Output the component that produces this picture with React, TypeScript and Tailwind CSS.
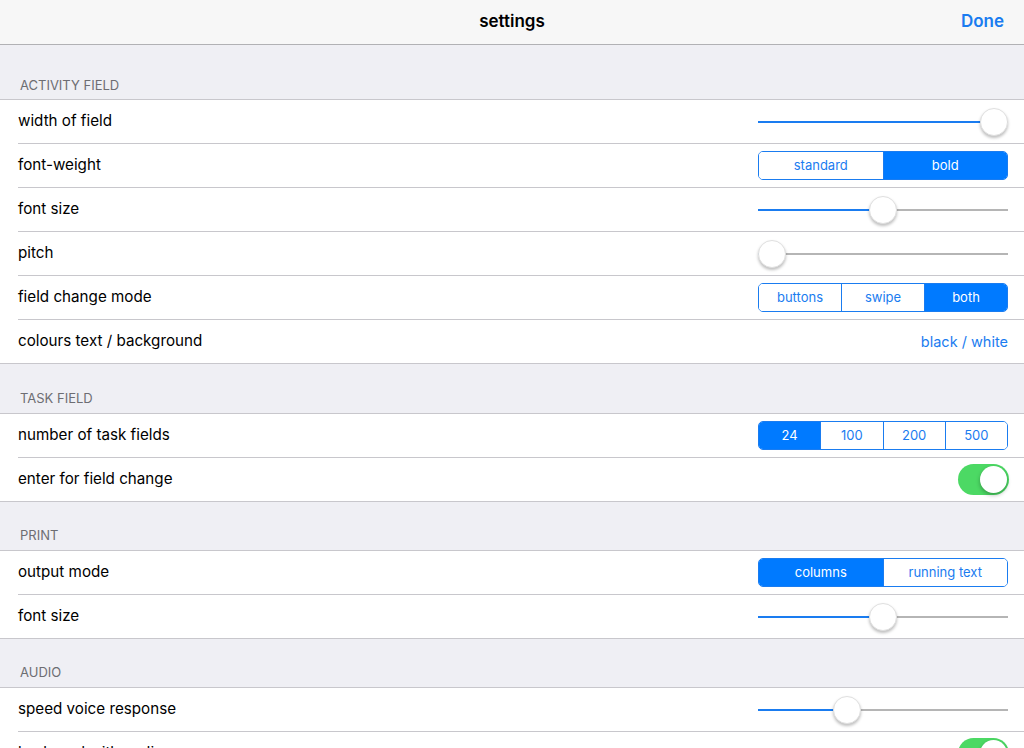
import React from "react";

const FONT = { fontFamily: "Inter, 'Noto Sans', sans-serif" };

function Slider({ value }: { value: number }) {
  const pos = 14 + value * 222;
  return (
    <div className="relative w-[250px] h-[28px] flex items-center">
      <div className="flex w-full h-[2px]">
        <div className="h-full bg-[#1a7cf0]" style={{ width: pos }} />
        <div className="h-full flex-1 bg-[#b5b5b5]" />
      </div>
      <div
        className="absolute top-0 w-[28px] h-[28px] rounded-full bg-white border border-[#e0e0e0] shadow-[0_2px_3px_rgba(0,0,0,0.25)]"
        style={{ left: pos - 14 }}
      />
    </div>
  );
}

function Segmented({ items, selected }: { items: string[]; selected: number }) {
  return (
    <div className="flex w-[250px] h-[29px] border border-[#1a7cf0] rounded-[5px] overflow-hidden text-[13px]">
      {items.map((it, i) => (
        <div
          key={it}
          className={
            "flex-1 flex items-center justify-center " +
            (i > 0 ? "border-l border-[#1a7cf0] " : "") +
            (i === selected ? "bg-[#007aff] text-white" : "bg-white text-[#1a7cf0]")
          }
        >
          {it}
        </div>
      ))}
    </div>
  );
}

function Toggle() {
  return (
    <div className="w-[51px] h-[31px] rounded-full bg-[#4cd964] flex items-center justify-end pr-[2px] mr-[-1px]">
      <div className="w-[27px] h-[27px] rounded-full bg-white shadow-[0_2px_4px_rgba(0,0,0,0.3)]" />
    </div>
  );
}

type Row = { label: string; control: React.ReactNode };

function Header({ title, h, pb }: { title: string; h: string; pb: string }) {
  return (
    <div className={h + " " + pb + " flex items-end pl-[20px] text-[13px] leading-[16px] text-[#6d6d72]"}>
      {title}
    </div>
  );
}

function Section({ rows }: { rows: Row[] }) {
  return (
    <div className="bg-white border-t border-b border-[#c8c7cc]">
      {rows.map((r, i) => (
        <div key={i} className="pl-[18px]">
          <div
            className={
              "h-[43px] flex items-center justify-between pr-[16px] " +
              (i < rows.length - 1 ? "border-b border-[#c8c7cc] box-content" : "")
            }
          >
            <span className="text-[15.2px] text-black">{r.label}</span>
            {r.control}
          </div>
        </div>
      ))}
    </div>
  );
}

export default function App() {
  return (
    <div className="w-[1024px] h-[748px] overflow-hidden bg-[#efeff4]" style={FONT}>
      <div className="h-[44px] bg-[#f7f7f7] border-b border-[#b1b1b4] box-content flex items-center relative">
        <div className="flex-1 text-center text-[17px] font-semibold text-black">settings</div>
        <div className="absolute right-[20px] top-0 h-[44px] flex items-center text-[17px] font-semibold text-[#1a7cf0]">
          Done
        </div>
      </div>

      <Header title="ACTIVITY FIELD" h="h-[54px]" pb="pb-[6px]" />
      <Section
        rows={[
          { label: "width of field", control: <Slider value={1} /> },
          { label: "font-weight", control: <Segmented items={["standard", "bold"]} selected={1} /> },
          { label: "font size", control: <Slider value={0.5} /> },
          { label: "pitch", control: <Slider value={0} /> },
          { label: "field change mode", control: <Segmented items={["buttons", "swipe", "both"]} selected={2} /> },
          {
            label: "colours text / background",
            control: <span className="text-[14.5px] text-[#1a7cf0]">black / white</span>,
          },
        ]}
      />

      <Header title="TASK FIELD" h="h-[49px]" pb="pb-[7px]" />
      <Section
        rows={[
          { label: "number of task fields", control: <Segmented items={["24", "100", "200", "500"]} selected={0} /> },
          { label: "enter for field change", control: <Toggle /> },
        ]}
      />

      <Header title="PRINT" h="h-[48px]" pb="pb-[7px]" />
      <Section
        rows={[
          { label: "output mode", control: <Segmented items={["columns", "running text"]} selected={0} /> },
          { label: "font size", control: <Slider value={0.5} /> },
        ]}
      />

      <Header title="AUDIO" h="h-[48px]" pb="pb-[7px]" />
      <Section
        rows={[
          { label: "speed voice response", control: <Slider value={0.34} /> },
          { label: "keyboard with audio", control: <Toggle /> },
        ]}
      />
    </div>
  );
}
